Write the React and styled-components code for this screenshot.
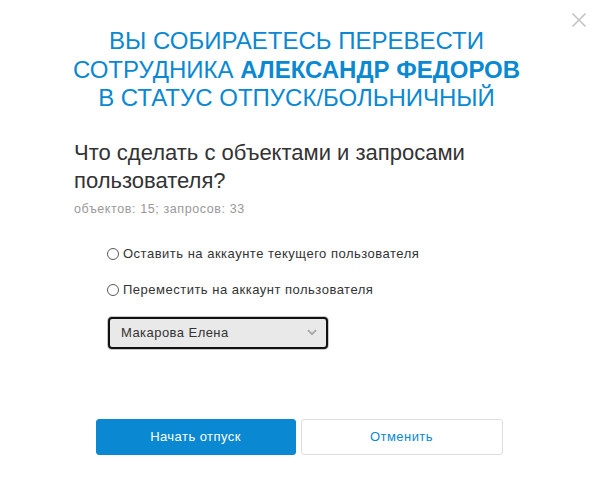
import React from "react";
import styled, { createGlobalStyle } from "styled-components";

const GlobalStyle = createGlobalStyle`
  html, body {
    margin: 0;
    padding: 0;
    background: #ffffff;
  }
  body {
    font-family: "Liberation Sans", Arial, sans-serif;
  }
`;

export default function App() {
  return (
    <Modal>
      <GlobalStyle />
      <CloseButton aria-label="close">
        <svg width="16" height="16" viewBox="0 0 16 16">
          <path d="M1.5 1.5 L14.5 14.5 M14.5 1.5 L1.5 14.5" stroke="#c4c4c4" strokeWidth="1.6" fill="none" />
        </svg>
      </CloseButton>
      <Title>
        Вы собираетесь перевести
        <br />
        сотрудника <b>Александр Федоров</b>
        <br />
        в статус отпуск/больничный
      </Title>
      <Question>Что сделать с объектами и запросами пользователя?</Question>
      <Counts>объектов: 15; запросов: 33</Counts>
      <Options>
        <Option>
          <Radio />
          Оставить на аккаунте текущего пользователя
        </Option>
        <Option>
          <Radio />
          Переместить на аккаунт пользователя
        </Option>
        <Select>
          <span>Макарова Елена</span>
          <svg width="10" height="7" viewBox="0 0 10 7">
            <path d="M1 1.2 L5 5.2 L9 1.2" stroke="#a8a8a8" strokeWidth="1.8" fill="none" />
          </svg>
        </Select>
      </Options>
      <Buttons>
        <Button primary>Начать отпуск</Button>
        <Button>Отменить</Button>
      </Buttons>
    </Modal>
  );
}

const Modal = styled.div`
  position: relative;
  box-sizing: border-box;
  width: 593px;
  height: 485px;
  padding: 27px 74px 0;
  color: #333333;
`;

const CloseButton = styled.div`
  position: absolute;
  top: 12px;
  right: 6px;
  width: 16px;
  height: 16px;
`;

const Title = styled.h1`
  margin: 0 -40px;
  font-size: 24px;
  line-height: 28.5px;
  font-weight: normal;
  text-align: center;
  text-transform: uppercase;
  color: #0a88d2;
  b {
    font-weight: bold;
  }
`;

const Question = styled.h2`
  margin: 26px 0 0;
  font-size: 22px;
  line-height: 28px;
  font-weight: normal;
  color: #333333;
`;

const Counts = styled.div`
  margin-top: 6px;
  font-size: 12.5px;
  letter-spacing: 0.6px;
  line-height: 16px;
  color: #999999;
`;

const Options = styled.div`
  display: flex;
  flex-direction: column;
  align-items: flex-start;
  gap: 20px;
  margin: 29px 0 0 33px;
`;

const Option = styled.label`
  display: flex;
  align-items: center;
  gap: 4px;
  font-size: 13px;
  letter-spacing: 0.5px;
  line-height: 16px;
  color: #333333;
`;

const Radio = styled.span`
  box-sizing: border-box;
  width: 12px;
  height: 12px;
  border: 1px solid #5a5a5a;
  border-radius: 50%;
  background: #ffffff;
`;

const Select = styled.div`
  box-sizing: border-box;
  display: flex;
  align-items: center;
  justify-content: space-between;
  width: 220px;
  height: 32px;
  margin: -1px 0 0 1px;
  padding: 0 9px 0 11px;
  border: 2px solid #111111;
  border-radius: 4px;
  box-shadow: 0 0 0 1px #c8c8c8;
  background: #e9e9e9;
  font-size: 13px;
  letter-spacing: 0.45px;
  color: #333333;
`;

const Buttons = styled.div`
  display: flex;
  justify-content: center;
  gap: 5px;
  margin-top: 70px;
  padding-left: 5px;
`;

const Button = styled.button`
  box-sizing: border-box;
  width: ${(p) => (p.primary ? "200px" : "202px")};
  height: 36px;
  border-radius: 3px;
  border: 1px solid ${(p) => (p.primary ? "#0a88d2" : "#dddddd")};
  background: ${(p) => (p.primary ? "#0a88d2" : "#ffffff")};
  color: ${(p) => (p.primary ? "#ffffff" : "#0a88d2")};
  font-family: "Liberation Sans", Arial, sans-serif;
  font-size: 13px;
  letter-spacing: 0.45px;
  cursor: pointer;
`;
